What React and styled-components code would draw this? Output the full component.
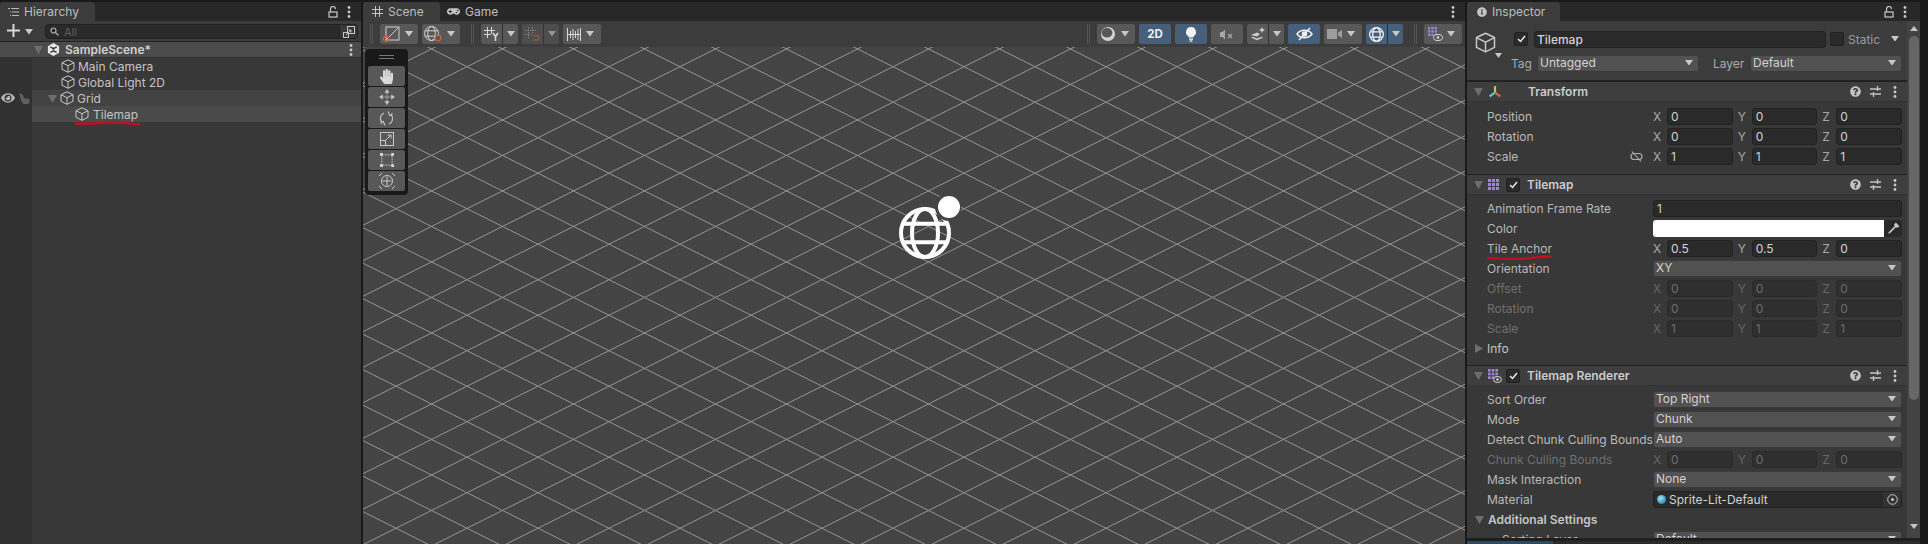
import React from 'react';
import styled, { createGlobalStyle } from 'styled-components';
import { FaHandPaper, FaEye, FaGamepad, FaInfoCircle, FaQuestionCircle } from 'react-icons/fa';

const GlobalStyle = createGlobalStyle`
	html, body {
		margin: 0;
		padding: 0;
		background: #191919;
		overflow: hidden;
	}
	* {
		box-sizing: border-box;
	}
`;

const Root = styled.div`
	width: 1928px;
	height: 544px;
	padding: 2px 8px 0 0;
	display: flex;
	gap: 2px;
	background: #191919;
	font-family: Inter, "Noto Sans", sans-serif;
	font-size: 12px;
	color: #c4c4c4;
	overflow: hidden;
`;

const Panel = styled.section`
	width: ${p => p.$width}px;
	flex: none;
	display: flex;
	flex-direction: column;
	position: relative;
	overflow: hidden;
	background: #383838;
`;

const TabBar = styled.div`
	height: 19px;
	flex: none;
	display: flex;
	align-items: stretch;
	background: #282828;
`;

const Tab = styled.div`
	width: ${p => p.$width}px;
	padding-left: ${p => p.$pad}px;
	display: flex;
	align-items: center;
	gap: 5px;
	background: ${p => (p.$active ? '#3c3c3c' : 'transparent')};
	border-radius: 3px 3px 0 0;
	color: #bdbdbd;
`;

const TabActions = styled.div`
	margin-left: auto;
	padding-right: ${p => p.$right}px;
	display: flex;
	align-items: center;
	gap: 9px;
`;

/* hierarchy */

const HierarchyBar = styled.div`
	height: 21px;
	flex: none;
	padding: 3px 3px 0 7px;
	display: flex;
	align-items: flex-start;
	background: #3c3c3c;
	border-bottom: 1px solid #232323;
`;

const AddCaret = styled.span`
	margin: 5px 0 0 5px;
	display: flex;
`;

const SearchField = styled.div`
	width: 296px;
	height: 15px;
	margin-left: 12px;
	padding-left: 4px;
	display: flex;
	align-items: center;
	gap: 5px;
	background: #2a2a2a;
	border: 1px solid #212121;
	border-radius: 4px 0 0 4px;
	color: #5f5f5f;
	font-size: 11px;
`;

const SearchButton = styled.div`
	width: 18px;
	height: 15px;
	display: flex;
	align-items: center;
	justify-content: center;
	background: #383838;
	border: 1px solid #212121;
	border-left: none;
	border-radius: 0 4px 4px 0;
`;

const SceneRow = styled.div`
	height: 16px;
	flex: none;
	padding: 0 8px 0 34px;
	display: flex;
	align-items: center;
	background: #4b4b4b;
	border-bottom: 1px solid #2f2f2f;
	font-weight: 600;
	color: #cfcfcf;
`;

const SceneMenu = styled.span`
	margin-left: auto;
	display: flex;
`;

const TreeArea = styled.div`
	flex: 1;
	display: flex;
`;

const Gutter = styled.div`
	width: 32px;
	flex: none;
	background: #313131;
`;

const GutterRow = styled.div`
	height: 16px;
	padding-left: 1px;
	display: flex;
	align-items: center;
	gap: 3px;
`;

const TreeList = styled.div`
	flex: 1;
`;

const TreeRow = styled.div`
	height: 16px;
	position: relative;
	padding-left: ${p => p.$indent}px;
	display: flex;
	align-items: center;
	gap: 3px;
	background: ${p => p.$bg || 'transparent'};
`;

const RowName = styled.span`
	margin-left: 1px;
`;

const ScribbleLine = styled.svg`
	position: absolute;
	left: ${p => p.$left}px;
	top: ${p => p.$top}px;
	overflow: visible;
`;

/* scene */

const SceneBar = styled.div`
	height: 26px;
	flex: none;
	padding: 3px 3px 0 7px;
	display: flex;
	align-items: flex-start;
	gap: 4px;
	background: #3c3c3c;
`;

const Grip = styled.div`
	width: 3px;
	height: 20px;
	flex: none;
	margin: 0 3px 0 ${p => p.$left || 0}px;
	border-left: 1px solid #555;
	border-right: 1px solid #555;
`;

const Spacer = styled.div`
	flex: 1;
`;

const ToolButton = styled.div`
	width: ${p => p.$width}px;
	height: 20px;
	flex: none;
	padding-right: ${p => (p.$gap ? 4 : 0)}px;
	display: flex;
	align-items: center;
	justify-content: center;
	gap: ${p => p.$gap || 0}px;
	background: ${p => (p.$active ? '#46607c' : '#585858')};
	border-radius: 2px;
	color: #eee;
	font-weight: 700;
	font-size: 11.5px;
`;

const SplitButton = styled.div`
	width: 37px;
	height: 20px;
	flex: none;
	display: flex;
	background: ${p => (p.$active ? '#46607c' : '#585858')};
	border-radius: 2px;
	opacity: ${p => (p.$dim ? 0.62 : 1)};
`;

const SplitMain = styled.div`
	width: 22px;
	display: flex;
	align-items: center;
	justify-content: center;
	border-right: 1px solid #303030;
`;

const SplitCaret = styled.div`
	flex: 1;
	display: flex;
	align-items: center;
	justify-content: center;
`;

const Viewport = styled.div`
	flex: 1;
	position: relative;
	background: #444444;
	overflow: hidden;
`;

const GridDrawing = styled.svg`
	display: block;
	width: 100%;
	height: 100%;
`;

const ToolsOverlay = styled.div`
	position: absolute;
	left: 2px;
	top: 2px;
	width: 43px;
	height: 146px;
	padding: 17px 3px 0;
	display: flex;
	flex-direction: column;
	gap: 1px;
	background: #191919;
	border-radius: 4px;
`;

const ToolsGrip = styled.div`
	position: absolute;
	left: 14px;
	top: 6px;
	width: 15px;
	height: 4px;
	border-top: 1px solid #777;
	border-bottom: 1px solid #777;
`;

const OverlayTool = styled.div`
	height: 20px;
	display: flex;
	align-items: center;
	justify-content: center;
	background: #585858;
	border-radius: 2px;
	color: #d8d8d8;
`;

const GlobeOverlay = styled.svg`
	position: absolute;
	left: 532px;
	top: 148px;
`;

/* inspector */

const InspectorBody = styled.div`
	flex: 1;
	min-height: 0;
	display: flex;
	background: #3c3c3c;
`;

const InspectorContent = styled.div`
	width: 440px;
	flex: none;
	overflow: hidden;
	background: #383838;
`;

const ScrollTrack = styled.div`
	flex: 1;
	padding-top: 5px;
	display: flex;
	flex-direction: column;
	align-items: center;
	background: #434343;
`;

const ScrollThumb = styled.div`
	width: 10px;
	height: 364px;
	margin: 5px 0 124px;
	background: #666666;
	border-radius: 5px;
`;

const InspectorFooter = styled.div`
	height: 6px;
	flex: none;
	display: flex;
	align-items: flex-end;
	background: #1f1f1f;
`;

const FooterProgress = styled.div`
	width: 86px;
	height: 3px;
	background: #2c4a60;
`;

const FooterRest = styled.div`
	flex: 1;
	height: 3px;
	background: #2b2b2b;
`;

const ObjectHeader = styled.div`
	height: 60px;
	padding: 10px 5px 0 8px;
	display: flex;
	background: #3c3c3c;
	border-bottom: 1px solid #232323;
`;

const BigCubeBox = styled.div`
	width: 36px;
	flex: none;
	position: relative;
	padding-top: 1px;
`;

const BigCubeCaret = styled.span`
	position: absolute;
	left: 20px;
	top: 22px;
	display: flex;
`;

const ObjectFields = styled.div`
	flex: 1;
	display: flex;
	flex-direction: column;
	gap: 8px;
`;

const ObjectLine = styled.div`
	height: 16px;
	display: flex;
	align-items: center;
	padding-left: ${p => p.$pad || 0}px;
`;

const CheckBox = styled.div`
	width: 14px;
	height: 14px;
	flex: none;
	margin-right: ${p => p.$right || 0}px;
	display: flex;
	align-items: center;
	justify-content: center;
	background: #2a2a2a;
	border: 1px solid #212121;
	border-radius: 2px;
`;

const NameField = styled.div`
	flex: 1;
	height: 17px;
	margin-right: 4px;
	padding-left: 2px;
	display: flex;
	align-items: center;
	background: #2a2a2a;
	border: 1px solid #212121;
	border-radius: 3px;
	font-weight: 500;
	color: #d2d2d2;
`;

const StaticText = styled.div`
	width: 43px;
	flex: none;
	margin-left: 4px;
	color: #9a9a9a;
`;

const CaretBox = styled.div`
	width: 11px;
	flex: none;
	display: flex;
	align-items: center;
`;

const SideLabel = styled.div`
	width: ${p => p.$width}px;
	margin-left: ${p => p.$left || 0}px;
	flex: none;
	color: #a9a9a9;
`;

const Dropdown = styled.div`
	height: 17px;
	width: ${p => (p.$width ? `${p.$width}px` : 'auto')};
	flex: ${p => (p.$width ? 'none' : '1')};
	min-width: 0;
	padding: 0 5px 1px 2px;
	display: flex;
	align-items: center;
	justify-content: space-between;
	background: #515151;
	border: 1px solid #3a3a3a;
	border-radius: 3px;
	color: #d2d2d2;
`;

const ComponentHeader = styled.div`
	height: 21px;
	padding: 0 5px 0 7px;
	display: flex;
	align-items: center;
	background: #3e3e3e;
	border-top: 1px solid #1f1f1f;
	border-bottom: 1px solid #333;
	font-weight: 600;
`;

const HeaderIcon = styled.div`
	width: 16px;
	height: 14px;
	margin-left: 5px;
	margin-right: 2px;
	flex: none;
	display: flex;
	align-items: center;
`;

const HeaderTitle = styled.div`
	margin-left: ${p => p.$left}px;
	flex: 1;
	color: #cbcbcb;
`;

const HeaderActions = styled.div`
	flex: none;
	display: flex;
	align-items: center;
	gap: 9px;
	margin-right: 5px;
`;

const HeaderMenu = styled.span`
	margin-left: 3px;
	display: flex;
`;

const ComponentBody = styled.div`
	padding: ${p => p.$top}px 0 ${p => p.$bottom}px;
`;

const PropRow = styled.div`
	height: 20px;
	padding: 0 5px 0 20px;
	display: grid;
	grid-template-columns: 166px 1fr;
	align-items: center;
	color: ${p => (p.$off ? '#6f6f6f' : '#b8b8b8')};
`;

const PropLabel = styled.div`
	position: relative;
	display: flex;
	align-items: center;
	padding-left: ${p => p.$indent || 0}px;
	padding-right: 10px;
	white-space: nowrap;
	overflow: ${p => (p.$clip ? 'hidden' : 'visible')};
`;

const LinkMark = styled.div`
	margin-left: auto;
	display: flex;
`;

const Vector = styled.div`
	display: grid;
	grid-template-columns: repeat(3, 1fr);
	gap: 5px;
`;

const VectorCell = styled.div`
	display: grid;
	grid-template-columns: 14px 1fr;
	align-items: center;
	color: ${p => (p.$off ? '#666' : '#a8a8a8')};
`;

const NumberField = styled.div`
	height: 17px;
	padding-left: 3px;
	display: flex;
	align-items: center;
	background: ${p => (p.$off ? '#2f2f2f' : '#2a2a2a')};
	border: 1px solid ${p => (p.$off ? '#292929' : '#212121')};
	border-radius: 3px;
	color: ${p => (p.$off ? '#6c6c6c' : '#d2d2d2')};
`;

const ColorField = styled.div`
	height: 17px;
	display: flex;
	background: #2a2a2a;
	border-radius: 3px;
	overflow: hidden;
`;

const ColorSwatch = styled.div`
	flex: 1;
	background: #ffffff;
`;

const ColorPicker = styled.div`
	width: 18px;
	display: flex;
	align-items: center;
	justify-content: center;
`;

const ObjectField = styled.div`
	height: 17px;
	padding-left: 3px;
	display: flex;
	align-items: center;
	gap: 3px;
	background: #2a2a2a;
	border: 1px solid #212121;
	border-radius: 3px;
	color: #d2d2d2;
`;

const ObjectTarget = styled.div`
	width: 18px;
	height: 100%;
	margin-left: auto;
	display: flex;
	align-items: center;
	justify-content: center;
	background: #333;
`;

const Orb = styled.div`
	width: 9px;
	height: 9px;
	border-radius: 50%;
	background: radial-gradient(circle at 40% 35%, #a9e4f7, #2f8cb8 70%);
`;

const FoldRow = styled.div`
	height: ${p => p.$height || 20}px;
	padding-left: ${p => p.$pad}px;
	display: flex;
	align-items: center;
	gap: ${p => p.$gap}px;
	font-weight: ${p => (p.$bold ? 600 : 400)};
	color: #c4c4c4;
`;

const gridLines = [];
for (let k = -34; k <= 34; k++) {
	// crossings of the iso grid sit at (317, 19.7) inside the viewport
	const offset = 19.7 + k * 35.5;
	gridLines.push({ id: `a${k}`, y1: offset - 317 * 0.5, y2: offset + (1102 - 317) * 0.5 });
	gridLines.push({ id: `b${k}`, y1: offset + 317 * 0.5, y2: offset - (1102 - 317) * 0.5 });
}

const Caret = ({ color = '#c8c8c8', size = 8 }) => (
	<svg width={size} height={size * 0.7} viewBox="0 0 8 5.6"><path d="M0 0h8L4 5.6z" fill={color} /></svg>
);

const FoldDown = () => <svg width="9" height="9" viewBox="0 0 9 9" style={{ flex: 'none' }}><path d="M0 1h9L4.5 9z" fill="#6d6d6d" /></svg>;
const FoldRight = () => <svg width="8" height="9" viewBox="0 0 8 9" style={{ flex: 'none' }}><path d="M0 0l8 4.5L0 9z" fill="#6d6d6d" /></svg>;

const Cube = ({ size = 14, color = '#c8c8c8', width = 1 }) => (
	<svg width={size} height={size} viewBox="0 0 14 14" fill="none" stroke={color} strokeWidth={width} style={{ flex: 'none' }}>
		<path d="M7 .8l6 2.9v6.6l-6 3-6-3V3.7z" strokeLinejoin="round" />
		<path d="M1 3.700l6 3 6-3M7 6.700v6.600" />
	</svg>
);

const Dots = ({ color = '#c8c8c8' }) => (
	<svg width="4" height="12" viewBox="0 0 4 12" fill={color}><circle cx="2" cy="1.5" r="1.4" /><circle cx="2" cy="6" r="1.4" /><circle cx="2" cy="10.5" r="1.4" /></svg>
);

const Lock = () => (
	<svg width="10" height="12" viewBox="0 0 10 12" fill="none" stroke="#c8c8c8" strokeWidth="1.2">
		<rect x="1" y="6" width="8" height="5" />
		<path d="M2.5 6V3a2.5 2.5 0 0 1 5 0" />
	</svg>
);

const ListIcon = () => (
	<svg width="11" height="10" viewBox="0 0 11 10" stroke="#b8b8b8" strokeWidth="1" fill="none">
		<path d="M0 1.5h2M3 1.5h8M2 5h1M4 5h7M2 8.5h1M4 8.5h7" />
	</svg>
);

const HashIcon = () => (
	<svg width="11" height="11" viewBox="0 0 11 11" stroke="#c4c4c4" strokeWidth="1" fill="none">
		<path d="M3.5 0v11M7.5 0v11M0 3.5h11M0 7.5h11" />
	</svg>
);

const PlusIcon = () => (
	<svg width="13" height="13" viewBox="0 0 13 13" stroke="#d8d8d8" strokeWidth="2"><path d="M6.5 0v13M0 6.5h13" /></svg>
);

const SearchGlass = () => (
	<svg width="9" height="9" viewBox="0 0 9 9" fill="none" stroke="#b0b0b0" strokeWidth="1.2"><circle cx="3.5" cy="3.5" r="2.5" /><path d="M5.5 5.5L8.5 8.5" /></svg>
);

const SceneSearchIcon = () => (
	<svg width="12" height="12" viewBox="0 0 12 12" fill="none" stroke="#c4c4c4" strokeWidth="1">
		<rect x="4.5" y=".5" width="7" height="7" />
		<rect x=".5" y="6.5" width="5" height="5" fill="#383838" />
		<path d="M3 9l5-5M5.5 4H8v2.5" />
	</svg>
);

const UnityLogo = () => (
	<svg width="13" height="13" viewBox="0 0 13 13" style={{ flex: 'none', marginRight: 5, marginLeft: 4 }}>
		<path d="M6.5 0l5.6 3.2v6.5L6.5 13 .9 9.7V3.2z" fill="#e6e6e6" />
		<path d="M6.5 4.6v3.6M3.4 9.4l3.1-1.6 3.1 1.6M3.3 3.9l3.2 1.7 3.2-1.7" stroke="#3c3c3c" strokeWidth="1.4" fill="none" />
	</svg>
);

const HandPointer = () => (
	<svg width="13" height="13" viewBox="0 0 12 12" fill="#5f5f5f"><path d="M1 1l3 1 2 4 4 0 1 2-1 3H5L3 8z" /></svg>
);

const SnapBox = () => (
	<svg width="19" height="17" viewBox="0 0 19 17" fill="none">
		<rect x="4" y="1" width="13" height="13" stroke="#d0d0d0" />
		<path d="M5 13L16 2" stroke="#d0d0d0" />
		<circle cx="4" cy="13" r="2.6" stroke="#d0603a" strokeWidth="1.2" />
	</svg>
);

const GlobeLines = ({ size = 16, color = '#d0d0d0', width = 1 }) => (
	<g fill="none" stroke={color} strokeWidth={width}>
		<circle cx={size / 2} cy={size / 2} r={size / 2 - width / 2} />
		<ellipse cx={size / 2} cy={size / 2} rx={size / 4} ry={size / 2 - width / 2} />
		<path d={`M${size * 0.08} ${size * 0.32}H${size * 0.92}M${size * 0.08} ${size * 0.68}H${size * 0.92}`} />
	</g>
);

const SnapGlobe = () => (
	<svg width="19" height="17" viewBox="0 0 19 17">
		<GlobeLines size={15} />
		<circle cx="14" cy="12" r="2.8" fill="#585858" stroke="#d0603a" strokeWidth="1.2" />
	</svg>
);

const GridY = () => (
	<svg width="15" height="14" viewBox="0 0 15 14" fill="none" stroke="#d8d8d8">
		<path d="M3.5 0v11M7.5 0v7M0 3.5h11M0 7.5h7" />
		<path d="M9 6l2.5 3.5L14 6M11.5 9.5V14" strokeWidth="1.6" />
	</svg>
);

const GridMagnet = () => (
	<svg width="15" height="14" viewBox="0 0 15 14" fill="none">
		<path d="M3.5 0v11M7.5 0v6M0 3.5h11M0 7.5h6" stroke="#b0b0b0" strokeDasharray="1.5 1" />
		<path d="M8 8.5h3.5a2 2 0 0 1 0 4.5H8" stroke="#d0603a" strokeWidth="1.5" />
	</svg>
);

const RulerTicks = () => (
	<svg width="14" height="13" viewBox="0 0 14 13" fill="none" stroke="#d8d8d8">
		<path d="M.5 0v13M13.5 0v13M0 6.5h14M3.5 3v7M6 1v11M8.5 3v7M11 1v11" />
	</svg>
);

const ShadedSphere = () => (
	<svg width="16" height="16" viewBox="0 0 16 16">
		<circle cx="8" cy="8" r="7" fill="#d4d4d4" />
		<ellipse cx="7" cy="6.8" rx="5.4" ry="4.8" fill="#585858" />
	</svg>
);

const Bulb = () => (
	<svg width="12" height="15" viewBox="0 0 12 15" fill="#f2f2f2">
		<path d="M6 0a5 5 0 0 1 3 9c-.6.5-.8 1-.8 1.6H3.8c0-.6-.2-1.1-.8-1.6A5 5 0 0 1 6 0z" />
		<rect x="4" y="11.5" width="4" height="1.3" />
		<rect x="4.6" y="13.4" width="2.8" height="1.3" />
	</svg>
);

const MutedSpeaker = () => (
	<svg width="14" height="11" viewBox="0 0 14 11" fill="#a8a8a8">
		<path d="M0 3h2.5L5 .5v10L2.5 8H0z" />
		<path d="M8 5l4 4M12 5L8 9" stroke="#a8a8a8" strokeWidth="1.2" fill="none" />
	</svg>
);

const EffectsIcon = () => (
	<svg width="16" height="14" viewBox="0 0 16 14" fill="#cfcfcf">
		<path d="M1 8l6-2.5L10 7 7 9.5z" />
		<path d="M1 10.5l6 2.7 6-2.7-1.6-.8L7 11.5 2.6 9.700z" />
		<path d="M12 0l.9 2.1L15 3l-2.1.9L12 6l-.9-2.1L9 3l2.1-.9z" />
	</svg>
);

const SlashedEye = () => (
	<svg width="17" height="14" viewBox="0 0 17 14" fill="none" stroke="#f0f0f0" strokeWidth="1.5">
		<path d="M1 7c3.5-5 11.5-5 15 0-3.500 5-11.500 5-15 0z" />
		<circle cx="8.5" cy="7" r="2" fill="#f0f0f0" />
		<path d="M14 1L3 13" />
	</svg>
);

const CameraIcon = () => (
	<svg width="15" height="10" viewBox="0 0 15 10" fill="#9d9d9d"><rect x="0" y="0" width="10" height="10" /><path d="M11 3.500L15 1v8l-4-2.500z" /></svg>
);

const TileDots = ({ size = 12 }) => {
	const cell = size / 3;
	const cells = [];
	for (let row = 0; row < 3; row++) {
		for (let col = 0; col < 3; col++) {
			cells.push(<rect key={`${row}-${col}`} x={col * cell} y={row * cell} width={cell - 1} height={cell - 1} fill="#9d86d8" />);
		}
	}
	return <g>{cells}</g>;
};

const TilemapEyeIcon = () => (
	<svg width="15" height="14" viewBox="0 0 15 14">
		<TileDots size={10} />
		<ellipse cx="10" cy="10.5" rx="4.5" ry="3" fill="#585858" stroke="#d8d8d8" />
		<circle cx="10" cy="10.5" r="1.3" fill="#d8d8d8" />
	</svg>
);

const TilemapIcon = () => <svg width="12" height="12" viewBox="0 0 12 12"><TileDots size={12} /></svg>;

const TilemapRendererIcon = () => (
	<svg width="14" height="14" viewBox="0 0 14 14">
		<TileDots size={11} />
		<ellipse cx="9.5" cy="10.5" rx="4" ry="3" fill="#3e3e3e" stroke="#d8d8d8" />
		<circle cx="9.5" cy="10.5" r="1.2" fill="#d8d8d8" />
	</svg>
);

const TransformIcon = () => (
	<svg width="14" height="14" viewBox="0 0 13 13" fill="none" strokeWidth="2">
		<path d="M6.5 1v6" stroke="#b6cf4a" />
		<path d="M6.500 7l-5 3.500" stroke="#5cc8e0" />
		<path d="M6.500 7l5 3.500" stroke="#d9663f" />
	</svg>
);

const SlidersIcon = () => (
	<svg width="11" height="11" viewBox="0 0 11 11" stroke="#c4c4c4" strokeWidth="1.3" fill="none">
		<path d="M0 3h11M0 8h11M7.500 0v5M3.500 6v5" />
	</svg>
);

const CheckMark = () => (
	<svg width="9" height="8" viewBox="0 0 9 8" fill="none" stroke="#e8e8e8" strokeWidth="1.5"><path d="M1 4l2.500 2.500L8 1" /></svg>
);

const LinkOff = () => (
	<svg width="13" height="11" viewBox="0 0 13 11" fill="none" stroke="#b0b0b0" strokeWidth="1.1">
		<rect x="1" y="2.5" width="11" height="6" rx="3" />
		<path d="M2 .5l9 10" />
	</svg>
);

const Eyedropper = () => (
	<svg width="13" height="13" viewBox="0 0 11 11" fill="#c8c8c8"><path d="M7.500.5l3 3-2 1.500-.8-.8L3 9 1 10l-.2-.2L2 8l4.600-4.700L5.800 2.500z" /></svg>
);

const TargetIcon = () => (
	<svg width="11" height="11" viewBox="0 0 11 11" fill="none" stroke="#c8c8c8"><circle cx="5.5" cy="5.5" r="4.8" /><circle cx="5.5" cy="5.5" r="1.5" fill="#c8c8c8" stroke="none" /></svg>
);

const MoveTool = () => (
	<svg width="16" height="16" viewBox="0 0 16 16" fill="#c8c8c8" stroke="#c8c8c8" strokeWidth=".6">
		<path d="M8 3v10M3 8h10" fill="none" />
		<path d="M8 .5L10 3.500H6zM8 15.500L6 12.500h4zM.5 8L3.500 6v4zM15.500 8L12.500 10V6z" />
	</svg>
);

const RotateTool = () => (
	<svg width="15" height="15" viewBox="0 0 15 15" fill="none" stroke="#c8c8c8" strokeWidth="1.1">
		<path d="M2.500 11A6 6 0 0 1 5 2M12.500 4A6 6 0 0 1 10 13" />
		<path d="M9 .5L11 5M6 14.500L4 10M2 13l.5-2.500L5 11M13 2l-.5 2.500L10 4" />
	</svg>
);

const ScaleTool = () => (
	<svg width="14" height="14" viewBox="0 0 14 14" fill="none" stroke="#c8c8c8">
		<rect x=".5" y=".5" width="13" height="13" />
		<rect x=".5" y="8.5" width="5" height="5" />
		<path d="M5.500 8.500L11 3M7.500 3H11v3.500" />
	</svg>
);

const RectTool = () => (
	<svg width="14" height="14" viewBox="0 0 15 15" fill="#d8d8d8">
		<path d="M2 2h11v11H2z" fill="none" stroke="#c8c8c8" strokeDasharray="2 1" />
		<rect width="3" height="3" /><rect x="12" width="3" height="3" /><rect y="12" width="3" height="3" /><rect x="12" y="12" width="3" height="3" />
	</svg>
);

const TransformTool = () => (
	<svg width="16" height="16" viewBox="0 0 16 16" fill="none" stroke="#c8c8c8">
		<circle cx="8" cy="8" r="5.500" />
		<path d="M8 3.500v9M3.500 8h9" />
		<path d="M0 3L3 0M13 0l3 3M0 13l3 3M13 16l3-3" />
	</svg>
);

const Scribble = ({ width, path, left, top }) => (
	<ScribbleLine $left={left} $top={top} width={width} height="5" viewBox={`0 0 ${width} 5`} fill="none">
		<path d={path} stroke="#c00f20" strokeWidth="2.4" strokeLinecap="round" />
	</ScribbleLine>
);

const HeaderRight = () => (
	<HeaderActions>
		<FaQuestionCircle size={11} color="#c4c4c4" />
		<SlidersIcon />
		<HeaderMenu><Dots /></HeaderMenu>
	</HeaderActions>
);

const Vec3 = ({ values, off }) => (
	<Vector>
		{['X', 'Y', 'Z'].map((axis, i) => (
			<VectorCell key={axis} $off={off}>
				<span>{axis}</span>
				<NumberField $off={off}>{values[i]}</NumberField>
			</VectorCell>
		))}
	</Vector>
);

const Select = ({ value, width }) => (
	<Dropdown $width={width}>
		<span>{value}</span>
		<Caret />
	</Dropdown>
);

const tools = [<FaHandPaper size={15} />, <MoveTool />, <RotateTool />, <ScaleTool />, <RectTool />, <TransformTool />];

export default function App() {
	return (
		<Root>
			<GlobalStyle />

			<Panel $width={361}>
				<TabBar>
					<Tab $active $width={95} $pad={8}><ListIcon />Hierarchy</Tab>
					<TabActions $right={10}><Lock /><Dots /></TabActions>
				</TabBar>
				<HierarchyBar>
					<PlusIcon />
					<AddCaret><Caret /></AddCaret>
					<SearchField><SearchGlass />All</SearchField>
					<SearchButton><SceneSearchIcon /></SearchButton>
				</HierarchyBar>
				<SceneRow>
					<FoldDown />
					<UnityLogo />
					SampleScene*
					<SceneMenu><Dots /></SceneMenu>
				</SceneRow>
				<TreeArea>
					<Gutter>
						<GutterRow />
						<GutterRow />
						<GutterRow><FaEye size={14} color="#b8b8b8" /><HandPointer /></GutterRow>
					</Gutter>
					<TreeList>
						<TreeRow $indent={29}><Cube />Main Camera</TreeRow>
						<TreeRow $indent={29}><Cube />Global Light 2D</TreeRow>
						<TreeRow $indent={16} $bg="#424242"><FoldDown /><Cube />Grid</TreeRow>
						<TreeRow $indent={43} $bg="#4a4a4a">
							<Cube />
							<RowName>Tilemap</RowName>
							<Scribble left={43} top={15} width={65} path="M1 2.5C14 3.5 22 1.5 36 1.500C46 1.500 56 2.500 64 3.500" />
						</TreeRow>
					</TreeList>
				</TreeArea>
			</Panel>

			<Panel $width={1102}>
				<TabBar>
					<Tab $active $width={77} $pad={9}><HashIcon />Scene</Tab>
					<Tab $width={70} $pad={7}><FaGamepad size={13} color="#c4c4c4" />Game</Tab>
					<TabActions $right={10}><Dots /></TabActions>
				</TabBar>
				<SceneBar>
					<Grip />
					<ToolButton $width={38} $gap={4}><SnapBox /><Caret /></ToolButton>
					<ToolButton $width={38} $gap={4}><SnapGlobe /><Caret /></ToolButton>
					<Grip $left={7} />
					<SplitButton><SplitMain><GridY /></SplitMain><SplitCaret><Caret /></SplitCaret></SplitButton>
					<SplitButton $dim><SplitMain><GridMagnet /></SplitMain><SplitCaret><Caret /></SplitCaret></SplitButton>
					<ToolButton $width={38} $gap={5}><RulerTicks /><Caret /></ToolButton>
					<Spacer />
					<Grip />
					<ToolButton $width={38} $gap={5}><ShadedSphere /><Caret /></ToolButton>
					<ToolButton $width={32} $active>2D</ToolButton>
					<ToolButton $width={32} $active><Bulb /></ToolButton>
					<ToolButton $width={32}><MutedSpeaker /></ToolButton>
					<SplitButton><SplitMain><EffectsIcon /></SplitMain><SplitCaret><Caret /></SplitCaret></SplitButton>
					<ToolButton $width={32} $active><SlashedEye /></ToolButton>
					<ToolButton $width={38} $gap={5}><CameraIcon /><Caret /></ToolButton>
					<SplitButton $active>
						<SplitMain><svg width="15" height="15" viewBox="0 0 15 15"><GlobeLines size={15} color="#f0f0f0" width={1.3} /></svg></SplitMain>
						<SplitCaret><Caret /></SplitCaret>
					</SplitButton>
					<Grip $left={7} />
					<ToolButton $width={38} $gap={4}><TilemapEyeIcon /><Caret /></ToolButton>
				</SceneBar>
				<Viewport>
					<GridDrawing viewBox="0 0 1102 497" preserveAspectRatio="none">
						{gridLines.map(line => (
							<line key={line.id} x1="0" y1={line.y1} x2="1102" y2={line.y2} stroke="#949494" strokeWidth="1" />
						))}
					</GridDrawing>
					<ToolsOverlay>
						<ToolsGrip />
						{tools.map((icon, i) => <OverlayTool key={i}>{icon}</OverlayTool>)}
					</ToolsOverlay>
					<GlobeOverlay width="66" height="66" viewBox="0 0 66 66">
						<g transform="translate(4 12)">
							<GlobeLines size={52} color="#ffffff" width={4} />
						</g>
						<circle cx="54" cy="12" r="14" fill="#444444" />
						<circle cx="54" cy="12" r="11" fill="#ffffff" />
					</GlobeOverlay>
				</Viewport>
			</Panel>

			<Panel $width={453}>
				<TabBar>
					<Tab $active $width={93} $pad={10}><FaInfoCircle size={10} color="#c4c4c4" />Inspector</Tab>
					<TabActions $right={13}><Lock /><Dots /></TabActions>
				</TabBar>
				<InspectorBody>
					<InspectorContent>
						<ObjectHeader>
							<BigCubeBox>
								<Cube size={21} width={1} />
								<BigCubeCaret><Caret size={7} /></BigCubeCaret>
							</BigCubeBox>
							<ObjectFields>
								<ObjectLine $pad={3}>
									<CheckBox $right={6}><CheckMark /></CheckBox>
									<NameField>Tilemap</NameField>
									<CheckBox />
									<StaticText>Static</StaticText>
									<CaretBox><Caret /></CaretBox>
								</ObjectLine>
								<ObjectLine>
									<SideLabel $width={26}>Tag</SideLabel>
									<Select value="Untagged" width={162} />
									<SideLabel $width={37} $left={14}>Layer</SideLabel>
									<Select value="Default" />
								</ObjectLine>
							</ObjectFields>
						</ObjectHeader>

						<ComponentHeader>
							<FoldDown />
							<HeaderIcon><TransformIcon /></HeaderIcon>
							<HeaderTitle $left={22}>Transform</HeaderTitle>
							<HeaderRight />
						</ComponentHeader>
						<ComponentBody $top={4} $bottom={8}>
							<PropRow><PropLabel>Position</PropLabel><Vec3 values={[0, 0, 0]} /></PropRow>
							<PropRow><PropLabel>Rotation</PropLabel><Vec3 values={[0, 0, 0]} /></PropRow>
							<PropRow>
								<PropLabel>Scale<LinkMark><LinkOff /></LinkMark></PropLabel>
								<Vec3 values={[1, 1, 1]} />
							</PropRow>
						</ComponentBody>

						<ComponentHeader>
							<FoldDown />
							<HeaderIcon><TilemapIcon /></HeaderIcon>
							<CheckBox><CheckMark /></CheckBox>
							<HeaderTitle $left={7}>Tilemap</HeaderTitle>
							<HeaderRight />
						</ComponentHeader>
						<ComponentBody $top={3} $bottom={6}>
							<PropRow><PropLabel>Animation Frame Rate</PropLabel><NumberField>1</NumberField></PropRow>
							<PropRow>
								<PropLabel>Color</PropLabel>
								<ColorField><ColorSwatch /><ColorPicker><Eyedropper /></ColorPicker></ColorField>
							</PropRow>
							<PropRow>
								<PropLabel>
									Tile Anchor
									<Scribble left={0} top={14} width={65} path="M1 3C14 3.500 28 4.500 40 3.500C48 2.500 56 1.500 64 1.500" />
								</PropLabel>
								<Vec3 values={[0.5, 0.5, 0]} />
							</PropRow>
							<PropRow><PropLabel>Orientation</PropLabel><Select value="XY" /></PropRow>
							<PropRow $off><PropLabel>Offset</PropLabel><Vec3 values={[0, 0, 0]} off /></PropRow>
							<PropRow $off><PropLabel>Rotation</PropLabel><Vec3 values={[0, 0, 0]} off /></PropRow>
							<PropRow $off><PropLabel>Scale</PropLabel><Vec3 values={[1, 1, 1]} off /></PropRow>
							<FoldRow $pad={8} $gap={4} $height={21}><FoldRight />Info</FoldRow>
						</ComponentBody>

						<ComponentHeader>
							<FoldDown />
							<HeaderIcon><TilemapRendererIcon /></HeaderIcon>
							<CheckBox><CheckMark /></CheckBox>
							<HeaderTitle $left={7}>Tilemap Renderer</HeaderTitle>
							<HeaderRight />
						</ComponentHeader>
						<ComponentBody $top={3} $bottom={0}>
							<PropRow><PropLabel>Sort Order</PropLabel><Select value="Top Right" /></PropRow>
							<PropRow><PropLabel>Mode</PropLabel><Select value="Chunk" /></PropRow>
							<PropRow><PropLabel $clip>Detect Chunk Culling Bounds</PropLabel><Select value="Auto" /></PropRow>
							<PropRow $off><PropLabel>Chunk Culling Bounds</PropLabel><Vec3 values={[0, 0, 0]} off /></PropRow>
							<PropRow><PropLabel>Mask Interaction</PropLabel><Select value="None" /></PropRow>
							<PropRow>
								<PropLabel>Material</PropLabel>
								<ObjectField><Orb />Sprite-Lit-Default<ObjectTarget><TargetIcon /></ObjectTarget></ObjectField>
							</PropRow>
							<FoldRow $pad={8} $gap={4} $bold><FoldDown />Additional Settings</FoldRow>
							<PropRow><PropLabel $indent={15}>Sorting Layer</PropLabel><Select value="Default" /></PropRow>
						</ComponentBody>
					</InspectorContent>
					<ScrollTrack>
						<svg width="8" height="5" viewBox="0 0 8 5"><path d="M4 0l4 5H0z" fill="#c4c4c4" /></svg>
						<ScrollThumb />
						<svg width="8" height="5" viewBox="0 0 8 5"><path d="M0 0h8L4 5z" fill="#c4c4c4" /></svg>
					</ScrollTrack>
				</InspectorBody>
				<InspectorFooter>
					<FooterProgress />
					<FooterRest />
				</InspectorFooter>
			</Panel>
		</Root>
	);
}
